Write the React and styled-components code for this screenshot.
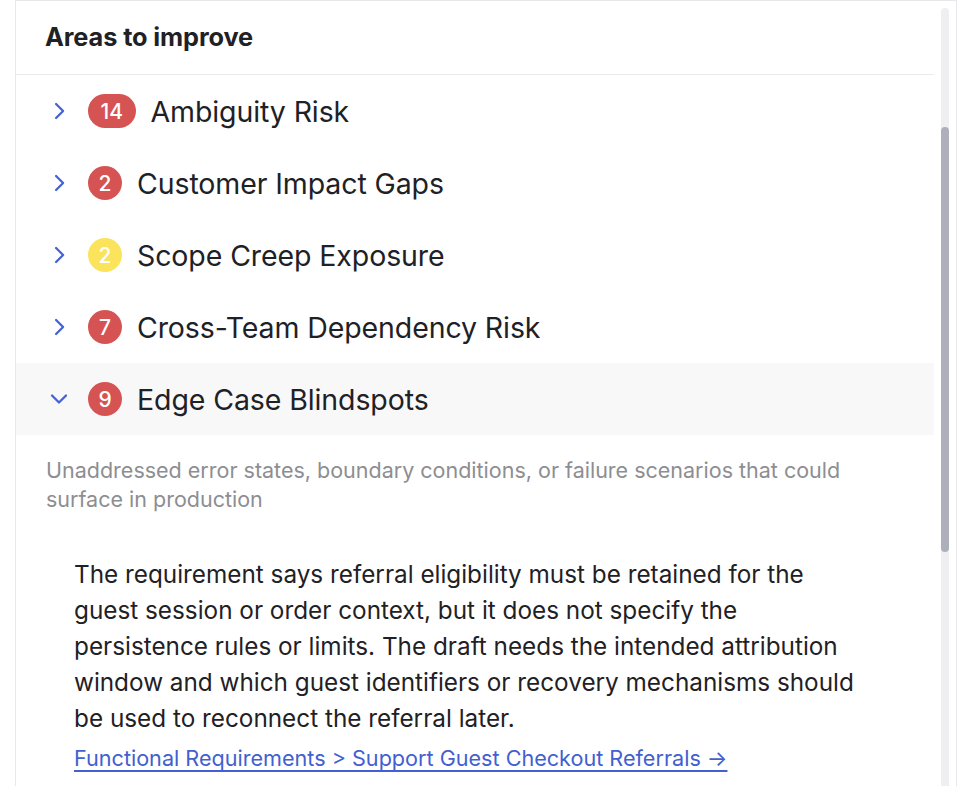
import React from "react";
import styled, { createGlobalStyle } from "styled-components";

const GlobalStyle = createGlobalStyle`
  html, body { margin: 0; padding: 0; background: #ffffff; overflow: hidden; }
  body { font-family: Inter, "Noto Sans", "Liberation Sans", sans-serif; color: #1e2126; }
  * { box-sizing: border-box; }
`;

const Page = styled.div`
  padding-left: 15px;
  height: 786px;
`;

const Card = styled.div`
  width: 942px;
  height: 786px;
  border: 1px solid #e8e8ea;
  border-bottom: none;
  background: #ffffff;
  display: flex;
  overflow: hidden;
`;

const Content = styled.div`
  flex: 1;
  min-width: 0;
  display: flex;
  flex-direction: column;
`;

const Rail = styled.div`
  flex: none;
  width: 22px;
  padding: 7px 7px 0;
  display: flex;
`;

const Track = styled.div`
  flex: 1;
  background: #efeff2;
  border-radius: 4px 4px 0 0;
  display: flex;
  flex-direction: column;
`;

const Thumb = styled.div`
  margin-top: ${(p) => p.$offset}px;
  height: ${(p) => p.$size}px;
  background: #adafbb;
  border-radius: 4px;
`;

const SectionHeader = styled.h2`
  margin: 0;
  height: 74px;
  flex: none;
  display: flex;
  align-items: center;
  padding: 0 30px 2px 29px;
  border-bottom: 1px solid #ececee;
  font-size: 25.3px;
  font-weight: 700;
  color: #1f2125;
  letter-spacing: -0.1px;
`;

const Row = styled.button`
  all: unset;
  box-sizing: border-box;
  flex: none;
  height: 72px;
  display: flex;
  align-items: center;
  gap: 15px;
  padding-left: 29px;
  background: ${(p) => (p.$open ? "#f8f8f9" : "transparent")};
  cursor: pointer;
`;

const Chevron = styled.svg`
  width: 28px;
  height: 28px;
  flex: none;
  color: #4762d6;
`;

const Badge = styled.span`
  flex: none;
  min-width: 34px;
  height: 34px;
  padding: 0 ${(p) => (p.$wide ? 12.5 : 0)}px;
  border-radius: 17px;
  display: inline-flex;
  align-items: center;
  justify-content: center;
  font-size: 21px;
  font-weight: 500;
  color: #ffffff;
  background: ${(p) => (p.$tone === "warn" ? "#fbe35c" : "#d65353")};
`;

const RowTitle = styled.span`
  font-size: 28.5px;
  font-weight: 400;
  color: #1e2126;
  letter-spacing: -0.1px;
`;

const Panel = styled.div`
  padding: 21px 30px 0 30px;
  display: flex;
  flex-direction: column;
`;

const Description = styled.p`
  margin: 0;
  font-size: 21.5px;
  line-height: 29px;
  color: #8d8e92;
  max-width: 825px;
`;

const Findings = styled.div`
  display: flex;
  flex-direction: column;
  gap: 28px;
  padding: 42px 0 0 28px;
`;

const Finding = styled.div`
  display: flex;
  flex-direction: column;
  gap: 7px;
`;

const FindingText = styled.p`
  margin: 0;
  font-size: 24.3px;
  line-height: 36px;
  color: #1f2125;
  max-width: 792px;
`;

const SourceLink = styled.a`
  align-self: flex-start;
  font-size: 21.6px;
  line-height: 30px;
  color: #4260d0;
  text-decoration: underline;
  text-underline-offset: 4px;
  text-decoration-thickness: 1.5px;
  cursor: pointer;
`;

function ChevronIcon({ open }) {
  return (
    <Chevron viewBox="0 0 24 24" fill="none" stroke="currentColor" strokeWidth="2" strokeLinecap="round" strokeLinejoin="round">
      {open ? <path d="m6 9 6 6 6-6" /> : <path d="m9.5 18 6-6-6-6" />}
    </Chevron>
  );
}

function AccordionRow({ count, tone, title, open }) {
  return (
    <Row $open={open}>
      <ChevronIcon open={open} />
      <Badge $tone={tone} $wide={count >= 10}>{count}</Badge>
      <RowTitle>{title}</RowTitle>
    </Row>
  );
}

const areas = [
  { count: 14, tone: "bad", title: "Ambiguity Risk" },
  { count: 2, tone: "bad", title: "Customer Impact Gaps" },
  { count: 2, tone: "warn", title: "Scope Creep Exposure" },
  { count: 7, tone: "bad", title: "Cross-Team Dependency Risk" },
];

const findings = [
  {
    text:
      "The requirement says referral eligibility must be retained for the guest session or order context, but it does not specify the persistence rules or limits. The draft needs the intended attribution window and which guest identifiers or recovery mechanisms should be used to reconnect the referral later.",
    link: "Functional Requirements > Support Guest Checkout Referrals →",
  },
];

export default function App() {
  return (
    <>
      <GlobalStyle />
      <Page>
        <Card>
          <Content>
            <SectionHeader>Areas to improve</SectionHeader>
            {areas.map((r) => (
              <AccordionRow key={r.title} {...r} />
            ))}
            <AccordionRow count={9} tone="bad" title="Edge Case Blindspots" open />
            <Panel>
              <Description>
                Unaddressed error states, boundary conditions, or failure scenarios that could surface in production
              </Description>
              <Findings>
                {findings.map((f) => (
                  <Finding key={f.link}>
                    <FindingText>{f.text}</FindingText>
                    <SourceLink>{f.link}</SourceLink>
                  </Finding>
                ))}
              </Findings>
            </Panel>
          </Content>
          <Rail>
            <Track>
              <Thumb $offset={119} $size={425} />
            </Track>
          </Rail>
        </Card>
      </Page>
    </>
  );
}
